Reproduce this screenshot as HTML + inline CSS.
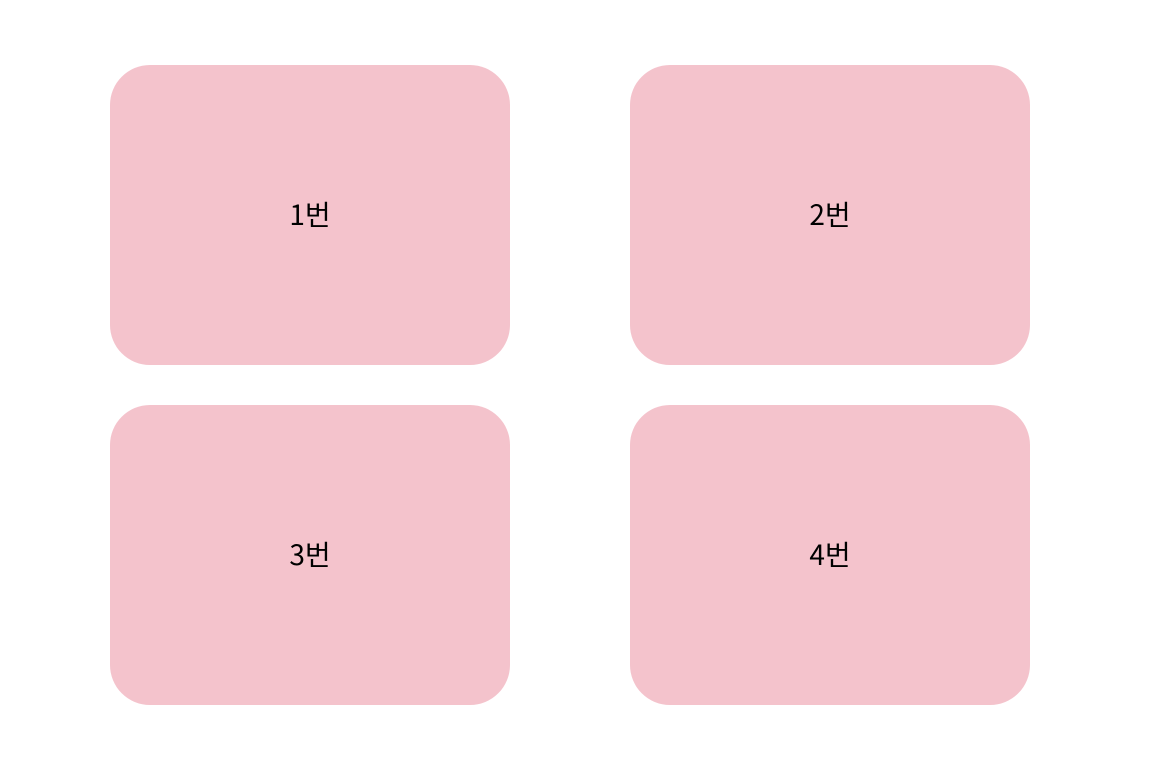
<!DOCTYPE html>
<html><head><meta charset="utf-8"><style>
html,body{margin:0;padding:0;background:#fff;width:1174px;height:782px;overflow:hidden}
.b{position:absolute;width:400px;height:300px;border-radius:40px;background:#f4c3cc;display:flex;align-items:center;justify-content:center;font-family:"Noto Sans CJK KR",sans-serif;font-size:28px;color:#000;padding-bottom:2px;box-sizing:border-box}
</style></head><body>
<div class="b" style="left:110px;top:65px">1번</div>
<div class="b" style="left:630px;top:65px">2번</div>
<div class="b" style="left:110px;top:405px">3번</div>
<div class="b" style="left:630px;top:405px">4번</div>
</body></html>
